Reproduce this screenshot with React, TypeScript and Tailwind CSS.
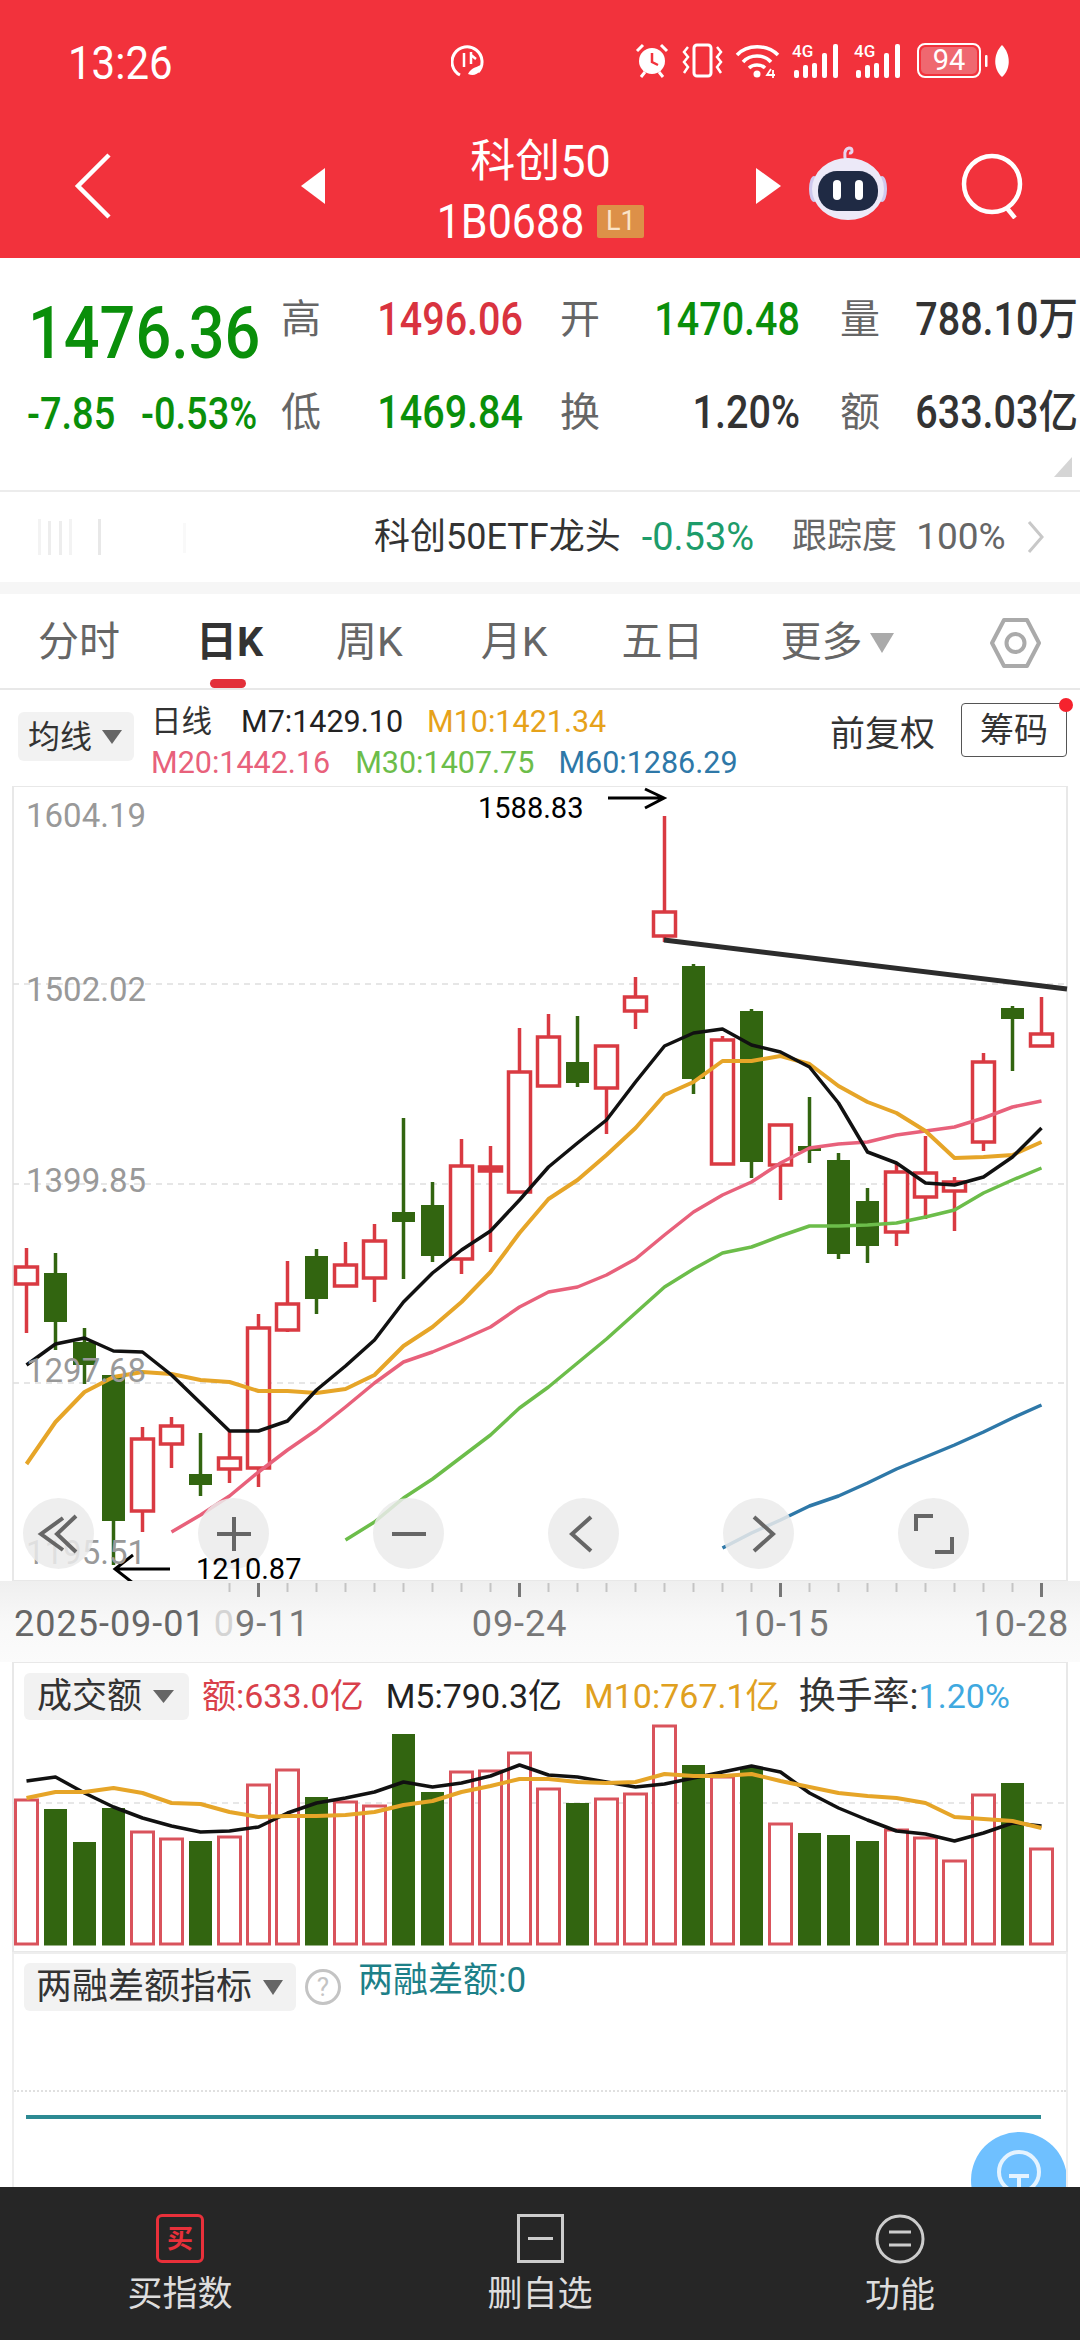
const X = (i: number) => 26.5 + 29 * i;
const RED = "#d93a42";
const GREEN = "#326510";

// wickTop, bodyTop, bodyBottom, wickBottom, up
const CANDLES: [number, number, number, number, boolean][] = [
  [1248, 1267, 1284, 1333, true],
  [1253, 1273, 1322, 1350, false],
  [1328, 1342, 1365, 1384, false],
  [1375, 1375, 1521, 1565, false],
  [1427, 1439, 1511, 1532, true],
  [1417, 1426, 1444, 1468, true],
  [1433, 1474, 1485, 1496, false],
  [1431, 1458, 1469, 1483, true],
  [1314, 1328, 1468, 1487, true],
  [1261, 1304, 1330, 1332, true],
  [1249, 1256, 1299, 1314, false],
  [1242, 1265, 1286, 1286, true],
  [1224, 1241, 1278, 1302, true],
  [1118, 1212, 1222, 1279, false],
  [1182, 1205, 1256, 1262, false],
  [1139, 1166, 1259, 1274, true],
  [1146, 1167, 1171, 1252, true],
  [1028, 1072, 1192, 1192, true],
  [1014, 1037, 1086, 1086, true],
  [1016, 1062, 1083, 1087, false],
  [1046, 1046, 1088, 1134, true],
  [977, 997, 1011, 1029, true],
  [816, 912, 936, 942, true],
  [964, 966, 1079, 1094, false],
  [1036, 1040, 1164, 1164, true],
  [1009, 1011, 1162, 1178, false],
  [1125, 1125, 1165, 1200, true],
  [1097, 1146, 1151, 1163, false],
  [1153, 1160, 1254, 1259, false],
  [1188, 1201, 1246, 1263, false],
  [1163, 1172, 1232, 1246, true],
  [1136, 1173, 1197, 1219, true],
  [1177, 1182, 1191, 1231, true],
  [1053, 1062, 1142, 1151, true],
  [1006, 1008, 1019, 1071, false],
  [997, 1034, 1046, 1046, true],
];

const MA7 = [1365, 1344, 1338, 1351, 1352, 1375, 1403, 1431, 1431, 1421, 1390, 1366, 1340, 1302, 1273, 1250, 1231, 1200, 1167, 1143, 1120, 1082, 1046, 1033, 1029, 1045, 1052, 1067, 1103, 1152, 1163, 1183, 1185, 1177, 1157, 1128];
const MA10 = [1464, 1422, 1392, 1377, 1372, 1374, 1380, 1382, 1391, 1391, 1393, 1389, 1375, 1346, 1327, 1302, 1272, 1233, 1199, 1180, 1155, 1128, 1095, 1082, 1061, 1061, 1056, 1064, 1086, 1102, 1113, 1131, 1158, 1157, 1155, 1142];
const MA20 = [1532, 1515, 1496, 1472, 1450, 1430, 1407, 1383, 1362, 1352, 1340, 1327, 1307, 1292, 1287, 1275, 1259, 1235, 1212, 1195, 1182, 1163, 1148, 1144, 1142, 1135, 1131, 1127, 1118, 1107, 1101];
const MA30 = [1540, 1522, 1498, 1479, 1457, 1435, 1408, 1387, 1363, 1339, 1313, 1287, 1269, 1253, 1247, 1236, 1226, 1226, 1225, 1223, 1217, 1210, 1193, 1180, 1168];
const MA60 = [1548, 1533, 1520, 1506, 1496, 1483, 1469, 1457, 1445, 1432, 1418, 1405];

const BARS = [1800, 1809, 1842, 1808, 1832, 1839, 1841, 1837, 1785, 1770, 1797, 1802, 1806, 1734, 1792, 1772, 1771, 1753, 1789, 1803, 1799, 1794, 1726, 1765, 1777, 1768, 1824, 1833, 1835, 1841, 1830, 1838, 1861, 1795, 1783, 1849];
const BAR_UP = [1, 0, 0, 0, 1, 1, 0, 1, 1, 1, 0, 1, 1, 0, 0, 1, 1, 1, 1, 0, 1, 1, 1, 0, 1, 0, 1, 0, 0, 0, 1, 1, 1, 1, 0, 1];
const VOL5 = [1781, 1777, 1793, 1807, 1818, 1826, 1832, 1831, 1827, 1813, 1803, 1798, 1792, 1782, 1787, 1783, 1776, 1765, 1775, 1777, 1782, 1787, 1784, 1778, 1772, 1766, 1772, 1793, 1808, 1820, 1831, 1834, 1841, 1833, 1823, 1826];
const VOL10 = [1798, 1792, 1792, 1788, 1793, 1803, 1804, 1812, 1817, 1816, 1816, 1815, 1812, 1805, 1801, 1792, 1786, 1779, 1779, 1782, 1783, 1782, 1774, 1776, 1776, 1774, 1781, 1787, 1793, 1796, 1798, 1803, 1817, 1819, 1821, 1828];

const pts = (ys: number[], from = 0) => ys.map((y, i) => `${X(i + from)},${y}`).join(" ");

function Line({ ys, from = 0, color, w = 3.5 }: { ys: number[]; from?: number; color: string; w?: number }) {
  return <polyline points={pts(ys, from)} fill="none" stroke={color} strokeWidth={w} strokeLinejoin="round" />;
}

function Signal() {
  return (
    <div className="relative w-[50px] h-[35px]">
      <span className="absolute left-0 top-[1px] text-[17px] leading-[15px] font-medium text-white">4G</span>
      <svg width="50" height="35" viewBox="0 0 50 35" fill="#fff">
        <rect x="2" y="27" width="5" height="8" rx="2" />
        <rect x="11" y="22" width="5" height="13" rx="2" />
        <rect x="20" y="20" width="5" height="15" rx="2" />
        <rect x="30" y="10" width="5" height="25" rx="2" />
        <rect x="41" y="1" width="5" height="34" rx="2" />
      </svg>
    </div>
  );
}

function StatusBar() {
  return (
    <div className="flex items-center h-[35px] mt-[43px] text-white">
      <div className="ml-[68px] mt-[5px] w-[383px] text-[42px] leading-[35px] scale-y-110 origin-left">13:26</div>
      <svg width="33" height="35" viewBox="0 0 33 35" fill="none" stroke="#fff" strokeWidth="3">
        <path d="M9 32 A15 15 0 1 1 27 29" />
        <path d="M13 10 V24 M20 9 V21 M20 12 L25 16" strokeWidth="2.5" />
        <path d="M17 31 C20 24 28 24 31 21 C31 29 25 34 17 31Z" fill="#fff" stroke="none" />
      </svg>
      <div className="flex items-center gap-[12px] ml-[151px]">
        <svg width="34" height="35" viewBox="0 0 34 35">
          <circle cx="17" cy="18" r="13" fill="#fff" />
          <path d="M17 10 V19 L23 22" fill="none" stroke="#f2323c" strokeWidth="2.5" />
          <path d="M2 8 L8 2 M32 8 L26 2 M6 34 L10 29 M28 34 L24 29" stroke="#fff" strokeWidth="3" />
        </svg>
        <svg className="ml-[1px]" width="41" height="35" viewBox="0 0 41 35" fill="none" stroke="#fff" strokeWidth="2.5">
          <rect x="12" y="2" width="17" height="31" rx="3" strokeWidth="3" />
          <path d="M6 4 L2 9 L6 14 L2 19 L6 24 L2 30 M35 4 L39 9 L35 14 L39 19 L35 24 L39 30" />
        </svg>
        <svg width="45" height="35" viewBox="0 0 45 35" fill="none" stroke="#fff" strokeWidth="3.5">
          <path d="M2 12 C12 1 32 1 43 12" />
          <path d="M8 19 C15 11 29 11 36 19" />
          <path d="M14 25 C18 21 26 21 30 25" />
          <circle cx="22" cy="31" r="3.5" fill="#fff" stroke="none" />
          <path d="M36 26 L32 32 H40 M38 27 V35" strokeWidth="1.8" />
        </svg>
        <Signal />
        <Signal />
        <div className="flex items-center justify-center ml-[1px] w-[64px] h-[35px] rounded-[8px] border-2 border-white p-[2px]">
          <div className="flex items-center justify-center w-full h-full rounded-[5px] bg-[#ef6870] text-[29px] leading-none text-white">94</div>
        </div>
        <svg className="-ml-[8px]" width="25" height="35" viewBox="0 0 25 35" fill="#fff">
          <rect x="0" y="12" width="2.5" height="12" rx="1" />
          <path d="M17 2 C26 11 26 26 17 34 C8 26 8 11 17 2Z" />
        </svg>
      </div>
    </div>
  );
}

function Robot() {
  return (
    <svg width="80" height="76" viewBox="0 0 80 76">
      <path d="M38 17 C36 10 36 4 41 3 C45 3 45 9 41 8" fill="none" stroke="#e8d5ee" strokeWidth="3" />
      <ellipse cx="6" cy="44" rx="5" ry="13" fill="#cfc9ee" />
      <ellipse cx="74" cy="44" rx="5" ry="13" fill="#cfc9ee" />
      <ellipse cx="40" cy="44" rx="36" ry="31" fill="#ece9f8" />
      <rect x="10" y="26" width="60" height="40" rx="19" fill="#1f2a44" />
      <rect x="25" y="35" width="8" height="20" rx="4" fill="#fff" />
      <rect x="47" y="35" width="8" height="20" rx="4" fill="#fff" />
    </svg>
  );
}

function Header() {
  return (
    <header className="h-[258px] bg-[#f2323c] text-white">
      <StatusBar />
      <div className="flex items-start h-[127px] mt-[53px]">
        <svg className="ml-[74px] mt-[22px]" width="38" height="66" viewBox="0 0 38 66" fill="none" stroke="#fff" strokeWidth="4.5">
          <path d="M35 2 L4 33 L35 64" />
        </svg>
        <svg className="ml-[189px] mt-[37px]" width="24" height="36" viewBox="0 0 24 36" fill="#fff">
          <path d="M24 0 V36 L0 18Z" />
        </svg>
        <div className="flex flex-col items-center w-[431px] mt-[6px]">
          <div className="text-[45px] leading-[50px]">科创50</div>
          <div className="flex items-center gap-[13px] mt-[17px]">
            <span className="text-[43px] leading-[34px] scale-y-110">1B0688</span>
            <span className="flex items-center justify-center w-[47px] h-[33px] bg-[#dd9048] text-[27px] leading-none text-[#fbe4c8] rounded-[2px]">L1</span>
          </div>
        </div>
        <svg className="mt-[37px]" width="25" height="36" viewBox="0 0 25 36" fill="#fff">
          <path d="M0 0 V36 L25 18Z" />
        </svg>
        <div className="ml-[27px] mt-[14px]">
          <Robot />
        </div>
        <svg className="ml-[72px] mt-[22px]" width="66" height="66" viewBox="0 0 66 66" fill="none" stroke="#fff" strokeWidth="4.5">
          <circle cx="32" cy="31" r="28" />
          <path d="M46 54 L55 65" />
        </svg>
      </div>
    </header>
  );
}

function Tall({ className, children }: { className: string; children: React.ReactNode }) {
  return <span className={`inline-block scale-y-115 ${className}`}>{children}</span>;
}

function Stats() {
  const label = "text-[40px] leading-[93px] text-[#666]";
  const value = "text-[39.5px] leading-[93px] font-medium text-right";
  return (
    <section className="relative h-[234px] pt-[15px] border-b-2 border-[#ececec]">
      <div className="grid grid-cols-[281px_41px_201px_77px_200px_80px_198px] grid-rows-[93px_93px]">
        <div className="pl-[28px] pt-[31px]">
          <Tall className="text-[63px] leading-[60px] font-medium text-[#0a8f0a]">1476.36</Tall>
        </div>
        <div className={label}>高</div>
        <div className={value}><Tall className="text-[#d9333f]">1496.06</Tall></div>
        <div className={`${label} text-right`}>开</div>
        <div className={value}><Tall className="text-[#0a8f0a]">1470.48</Tall></div>
        <div className={`${label} text-right`}>量</div>
        <div className={`${value} text-[#333] whitespace-nowrap`}><Tall className="">788.10万</Tall></div>

        <div className="flex pl-[27px] pt-[19px] text-[38px] leading-[60px] font-medium text-[#0a8f0a]">
          <Tall className="w-[114px]">-7.85</Tall>
          <Tall className="">-0.53%</Tall>
        </div>
        <div className={label}>低</div>
        <div className={value}><Tall className="text-[#0a8f0a]">1469.84</Tall></div>
        <div className={`${label} text-right`}>换</div>
        <div className={`${value} text-[#333]`}><Tall className="">1.20%</Tall></div>
        <div className={`${label} text-right`}>额</div>
        <div className={`${value} text-[#333] whitespace-nowrap`}><Tall className="">633.03亿</Tall></div>
      </div>
      <svg className="absolute right-[8px] bottom-[13px]" width="18" height="20" viewBox="0 0 18 20" fill="#d5d5d5">
        <path d="M18 0 V20 H0Z" />
      </svg>
    </section>
  );
}

function EtfRow() {
  return (
    <section className="flex items-center h-[90px] pl-[36px] border-b-[12px] border-[#f6f6f6] box-content">
      <svg className="shrink-0" width="150" height="36" viewBox="0 0 150 36" fill="#d8d8d8">
        <rect x="2" y="0" width="3" height="36" opacity="0.3" />
        <rect x="12" y="2" width="3" height="34" opacity="0.45" />
        <rect x="23" y="2" width="3" height="34" opacity="0.45" />
        <rect x="33" y="0" width="3" height="36" opacity="0.3" />
        <rect x="62" y="0" width="3" height="36" opacity="0.6" />
        <rect x="147" y="4" width="3" height="30" opacity="0.15" />
      </svg>
      <span className="ml-[188px] text-[36px] text-[#333] whitespace-nowrap">科创50ETF龙头</span>
      <span className="ml-[21px] text-[38px] text-[#1d9c6a]">-0.53%</span>
      <span className="ml-[38px] text-[35px] text-[#666] whitespace-nowrap">跟踪度</span>
      <span className="ml-[19px] text-[37px] text-[#666]">100%</span>
      <svg className="ml-[21px]" width="17" height="32" viewBox="0 0 17 32" fill="none" stroke="#c8c8c8" strokeWidth="3">
        <path d="M2 1 L15 16 L2 31" />
      </svg>
    </section>
  );
}

function Tabs() {
  return (
    <nav className="relative flex items-center h-[96px] pt-[3px] border-b-2 border-[#e8e8e8] text-[41px] text-[#666]">
      <span className="ml-[38px]">分时</span>
      <span className="ml-[76px] font-bold text-[#333]">日K</span>
      <span className="ml-[73px]">周K</span>
      <span className="ml-[78px]">月K</span>
      <span className="ml-[74px]">五日</span>
      <span className="ml-[77px]">更多</span>
      <svg className="ml-[7px]" width="24" height="20" viewBox="0 0 24 20" fill="#aaa">
        <path d="M0 0 H24 L12 20Z" />
      </svg>
      <svg className="ml-[95px]" width="53" height="52" viewBox="0 0 53 52" fill="none" stroke="#aaa" strokeWidth="4">
        <path d="M15 3 H38 L50 26 L38 49 H15 L3 26Z" strokeLinejoin="round" />
        <circle cx="26.5" cy="26" r="9" />
      </svg>
      <span className="absolute left-[210px] bottom-0 w-[36px] h-[9px] rounded-full bg-[#e3303a]" />
    </nav>
  );
}

function Legend() {
  return (
    <section className="flex h-[96px]">
      <div className="flex items-center mt-[22px] ml-[18px] pl-[10px] w-[116px] h-[49px] rounded-[6px] bg-[#f2f2f2] text-[32px] text-[#333]">
        均线
        <svg className="ml-[10px]" width="20" height="14" viewBox="0 0 20 14" fill="#666">
          <path d="M0 0 H20 L10 14Z" />
        </svg>
      </div>
      <div className="flex flex-col ml-[17px] mt-[11px] text-[30.5px] leading-[41px] whitespace-nowrap">
        <div className="flex">
          <span className="text-[#333]">日线</span>
          <span className="ml-[29px] text-[#222]">M7:1429.10</span>
          <span className="ml-[24px] text-[#e6a21a]">M10:1421.34</span>
        </div>
        <div className="flex">
          <span className="text-[#e8617b]">M20:1442.16</span>
          <span className="ml-[25px] text-[#6cbd4a]">M30:1407.75</span>
          <span className="ml-[24px] text-[#2e78a8]">M60:1286.29</span>
        </div>
      </div>
      <span className="ml-auto mt-[20px] text-[35px] leading-[50px] text-[#333]">前复权</span>
      <div className="relative flex items-center justify-center mt-[13px] ml-[26px] mr-[13px] w-[106px] h-[54px] rounded-[4px] border border-[#555] text-[34px] text-[#333]">
        筹码
        <span className="absolute -right-[7px] -top-[6px] w-[14px] h-[14px] rounded-full bg-[#f5222d]" />
      </div>
    </section>
  );
}

function RoundBtn({ left, children }: { left: string; children: React.ReactNode }) {
  return (
    <div className={`absolute top-[712px] w-[71px] h-[71px] rounded-full bg-[#ebebeb]/85 ${left}`}>
      <svg width="72" height="72" viewBox="0 0 72 72" fill="none" stroke="#666" strokeWidth="4">
        {children}
      </svg>
    </div>
  );
}

function PriceChart() {
  const axis = "absolute left-[26px] text-[33px] leading-[26px] text-[#999]";
  return (
    <section className="relative h-[795px]">
      <svg className="block" width="1080" height="795" viewBox="0 786 1080 795">
        <rect x="13" y="786" width="1054" height="795" fill="none" stroke="#e8e8e8" strokeWidth="2" />
        {[984, 1184, 1383].map((y) => (
          <line key={y} x1="13" x2="1067" y1={y} y2={y} stroke="#dedede" strokeWidth="1.5" strokeDasharray="6 5" />
        ))}
        {CANDLES.map(([wt, bt, bb, wb, up], i) => {
          const color = up ? RED : GREEN;
          return (
            <g key={i}>
              <line x1={X(i)} x2={X(i)} y1={wt} y2={wb} stroke={color} strokeWidth="3.5" />
              {up ? (
                <rect x={X(i) - 11} y={bt} width="22" height={bb - bt} fill={bb - bt < 6 ? color : "#fff"} stroke={color} strokeWidth="3.5" />
              ) : (
                <rect x={X(i) - 11.5} y={bt} width="23" height={bb - bt} fill={color} />
              )}
            </g>
          );
        })}
        <Line ys={MA60} from={24} color="#2e78a8" />
        <Line ys={MA30} from={11} color="#6cbd4a" />
        <Line ys={MA20} from={5} color="#e8617b" />
        <Line ys={MA10} color="#e6a528" w={4} />
        <Line ys={MA7} color="#111" />
        <line x1="664" y1="940" x2="1067" y2="989" stroke="#2c2c2c" strokeWidth="5" />
        <path d="M608 798 H664 M645 789 L664 798 L645 808" fill="none" stroke="#000" strokeWidth="3" />
        <path d="M170 1569 H115 M133 1555 L115 1569 L133 1583" fill="none" stroke="#000" strokeWidth="3" />
      </svg>
      <span className={`${axis} top-[17px]`}>1604.19</span>
      <span className={`${axis} top-[191px]`}>1502.02</span>
      <span className={`${axis} top-[382px]`}>1399.85</span>
      <span className={`${axis} top-[572px]`}>1297.68</span>
      <span className={`${axis} top-[754px]`}>1195.51</span>
      <span className="absolute left-[478px] top-[7px] text-[29px] leading-[30px] text-black">1588.83</span>
      <RoundBtn left="left-[23px]">
        <path d="M40 20 L18 36 L40 52 M53 18 L34 36 L53 54" />
      </RoundBtn>
      <RoundBtn left="left-[198px]">
        <path d="M36 19 V53 M19 36 H53" />
      </RoundBtn>
      <RoundBtn left="left-[373px]">
        <path d="M19 36 H53" />
      </RoundBtn>
      <RoundBtn left="left-[548px]">
        <path d="M43 19 L24 36 L43 53" />
      </RoundBtn>
      <RoundBtn left="left-[723px]">
        <path d="M31 19 L50 36 L31 53" />
      </RoundBtn>
      <RoundBtn left="left-[898px]">
        <path d="M18 33 V18 H35 M54 39 V54 H37" />
      </RoundBtn>
      <span className="absolute left-[196px] top-[770px] text-[29px] leading-[26px] text-black">1210.87</span>
    </section>
  );
}

function TimeAxis() {
  return (
    <section className="relative h-[81px] bg-gradient-to-b from-[#efefef] via-[#f8f8f8] to-[#fbfbfb]">
      <svg className="absolute left-0 top-0" width="1080" height="20" viewBox="0 0 1080 20">
        {CANDLES.map((_, i) => {
          if (i < 7) return null;
          const major = (i - 8) % 9 === 0;
          return <line key={i} x1={X(i)} x2={X(i)} y1="2" y2={major ? 16 : 11} stroke={major ? "#777" : "#c4c4c4"} strokeWidth={major ? 3 : 2} />;
        })}
      </svg>
      <div className="flex pt-[28px] text-[36px] leading-[30px] tracking-[1px] text-[#777]">
        <span className="ml-[14px] text-[#666]">2025-09-01</span>
        <span className="ml-[8px]"><span className="text-[#d4d4d4]">0</span>9-11</span>
        <span className="ml-[162px]">09-24</span>
        <span className="ml-[166px]">10-15</span>
        <span className="ml-[144px]">10-28</span>
      </div>
    </section>
  );
}

function VolumePane() {
  return (
    <section className="relative h-[290px]">
      <svg className="absolute left-0 top-0" width="1080" height="290" viewBox="0 1662 1080 290">
        <rect x="13" y="1662" width="1054" height="290" fill="none" stroke="#e8e8e8" strokeWidth="2" />
        <line x1="13" x2="1067" y1="1803" y2="1803" stroke="#e0e0e0" strokeWidth="1.5" strokeDasharray="6 5" />
        {BARS.map((y, i) =>
          BAR_UP[i] ? (
            <rect key={i} x={X(i) - 11} y={y} width="22" height={1944 - y} fill="#fff" stroke="#d9535c" strokeWidth="3" />
          ) : (
            <rect key={i} x={X(i) - 11.5} y={y} width="23" height={1945.5 - y} fill={GREEN} />
          ),
        )}
        <Line ys={VOL5} color="#111" />
        <Line ys={VOL10} color="#e6a528" w={4} />
      </svg>
      <div className="relative flex items-center pt-[11px] text-[34px] leading-[47px] whitespace-nowrap">
        <div className="flex items-center ml-[24px] pl-[13px] w-[165px] h-[47px] rounded-[6px] bg-[#f2f2f2] text-[35px] text-[#333]">
          成交额
          <svg className="ml-[11px]" width="21" height="13" viewBox="0 0 21 13" fill="#666">
            <path d="M0 0 H21 L10.5 13Z" />
          </svg>
        </div>
        <span className="ml-[13px] text-[#d9404a]">额:633.0亿</span>
        <span className="ml-[22px] text-[#222]">M5:790.3亿</span>
        <span className="ml-[22px] text-[#e0a020]">M10:767.1亿</span>
        <span className="ml-[19px] text-[37px] text-[#333]">换手率:</span>
        <span className="text-[#3fa9e0]">1.20%</span>
      </div>
    </section>
  );
}

function MarginPane() {
  return (
    <section className="relative h-[235px] mx-[12px] border-x-2 border-t-2 border-[#eeeeee] overflow-hidden">
      <div className="flex items-start pt-[9px]">
        <div className="flex items-center ml-[10px] pl-[12px] w-[272px] h-[48px] rounded-[6px] bg-[#f2f2f2] text-[36px] text-[#333]">
          两融差额指标
          <svg className="ml-[11px]" width="20" height="15" viewBox="0 0 20 15" fill="#666">
            <path d="M0 0 H20 L10 15Z" />
          </svg>
        </div>
        <div className="flex items-center justify-center ml-[9px] mt-[6px] w-[36px] h-[36px] rounded-full border-[3px] border-[#c4c4c4] text-[26px] leading-none text-[#c4c4c4]">?</div>
        <span className="ml-[17px] text-[35px] leading-[36px] text-[#1d8088]">两融差额:0</span>
      </div>
      <div className="absolute left-0 right-0 top-[136px] border-t-2 border-dotted border-[#e0e0e0]" />
      <div className="absolute left-[12px] w-[1015px] top-[161px] h-[4px] bg-[#2d8a93]" />
      <div className="absolute left-[957px] top-[178px] w-[96px] h-[96px] rounded-full bg-[#6fc0ff]">
        <svg className="mx-auto mt-[18px]" width="44" height="60" viewBox="0 0 44 60" fill="none" stroke="#e4f3ff" strokeWidth="4">
          <circle cx="22" cy="22" r="20" />
          <path d="M12 26 H32 M22 26 V42" />
        </svg>
      </div>
    </section>
  );
}

function BottomBar() {
  const tab = "flex flex-col items-center w-[360px] pt-[27px]";
  const text = "mt-[10px] text-[35px] leading-[44px] text-[#ddd]";
  return (
    <footer className="flex h-[153px] bg-[#262626]">
      <div className={tab}>
        <div className="flex items-center justify-center w-[48px] h-[49px] rounded-[6px] border-[3px] border-[#e8303a] text-[26px] leading-none font-bold text-[#e8303a]">买</div>
        <span className={text}>买指数</span>
      </div>
      <div className={tab}>
        <div className="flex items-center justify-center w-[47px] h-[49px] border-[3px] border-[#ccc]">
          <span className="w-[25px] h-[3px] bg-[#ccc]" />
        </div>
        <span className={text}>删自选</span>
      </div>
      <div className={tab}>
        <svg width="50" height="50" viewBox="0 0 50 50" fill="none" stroke="#ccc" strokeWidth="3">
          <circle cx="25" cy="25" r="23" />
          <path d="M14 18 H36 M14 31 H36" />
        </svg>
        <span className={text}>功能</span>
      </div>
    </footer>
  );
}

export default function App() {
  return (
    <div className="flex flex-col w-[1080px] h-[2340px] overflow-hidden bg-white [font-family:Roboto,'Noto_Sans_CJK_SC',sans-serif]">
      <Header />
      <Stats />
      <EtfRow />
      <Tabs />
      <Legend />
      <PriceChart />
      <TimeAxis />
      <VolumePane />
      <MarginPane />
      <BottomBar />
    </div>
  );
}
